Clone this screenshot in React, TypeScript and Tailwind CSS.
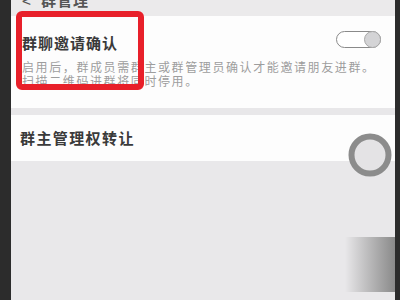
import React from "react";

const font = { fontFamily: '"Noto Sans CJK SC", "Noto Sans", sans-serif' };

export default function App() {
  return (
    <div className="w-[400px] h-[300px] flex overflow-hidden bg-[#e9e8ea]" style={font}>
      <div className="w-[11px] h-full bg-[#2c2c2c]" />
      <div className="relative flex-1 flex flex-col bg-[#e9e8ea]">
        <div className="h-[16px] bg-[#ebeaeb] overflow-hidden flex items-end">
          <div className="flex items-center gap-[10px] pl-[11px] mb-[8px] text-[15px] text-[#555] leading-[16px]">
            <span className="text-[16px]">&lt;</span>
            <span className="font-bold tracking-[1px]">群管理</span>
          </div>
        </div>
        <div className="h-[92px] bg-[#fdfdfd] pl-[11px] pr-[14px] pt-[18px] relative">
          <div className="flex items-start justify-between">
            <div className="text-[15px] leading-[18px] font-bold text-[#3a3a3a] tracking-[1px]">群聊邀请确认</div>
            <div className="mt-[-3px] w-[45px] h-[17px] rounded-full border-[1.5px] border-[#8a8a8a] bg-white relative">
              <div className="absolute right-[-1px] top-[-1px] w-[17px] h-[17px] rounded-full bg-[#d4d4d6] border border-[#a8a8a8]" />
            </div>
          </div>
          <div className="mt-[8px] text-[12px] leading-[14px] text-[#9d9d9d] tracking-[1.6px] whitespace-nowrap">
            <div>启用后，群成员需群主或群管理员确认才能邀请朋友进群。</div>
            <div>扫描二维码进群将同时停用。</div>
          </div>
        </div>
        <div className="h-[7px] bg-[#e8e7e9]" />
        <div className="h-[46px] bg-[#fdfdfd] flex items-center pl-[9px]">
          <div className="text-[15px] font-bold text-[#3a3a3a] tracking-[1.4px]">群主管理权转让</div>
        </div>
        <div className="flex-1 bg-[#e9e8ea]" />

        <div className="absolute left-[5px] top-[11px] w-[128px] h-[79px] border-[6px] border-[#e8202a] rounded-[6px]" />

        <svg className="absolute left-[336px] top-[132px]" width="46" height="46" viewBox="0 0 46 46">
          <circle cx="23" cy="23" r="18.5" fill="#e4e3e5" stroke="#8c8c8c" strokeWidth="6" />
          <path d="M27 2 L33 6 L27 8 Z" fill="#8c8c8c" />
        </svg>

        <div className="absolute left-[334px] top-[237px] w-[50px] h-[55px] bg-gradient-to-r from-[#e9e8ea] to-[#8a8a8a]" />
      </div>
      <div className="w-[5px] h-full bg-[#2c2c2c]" />
    </div>
  );
}
